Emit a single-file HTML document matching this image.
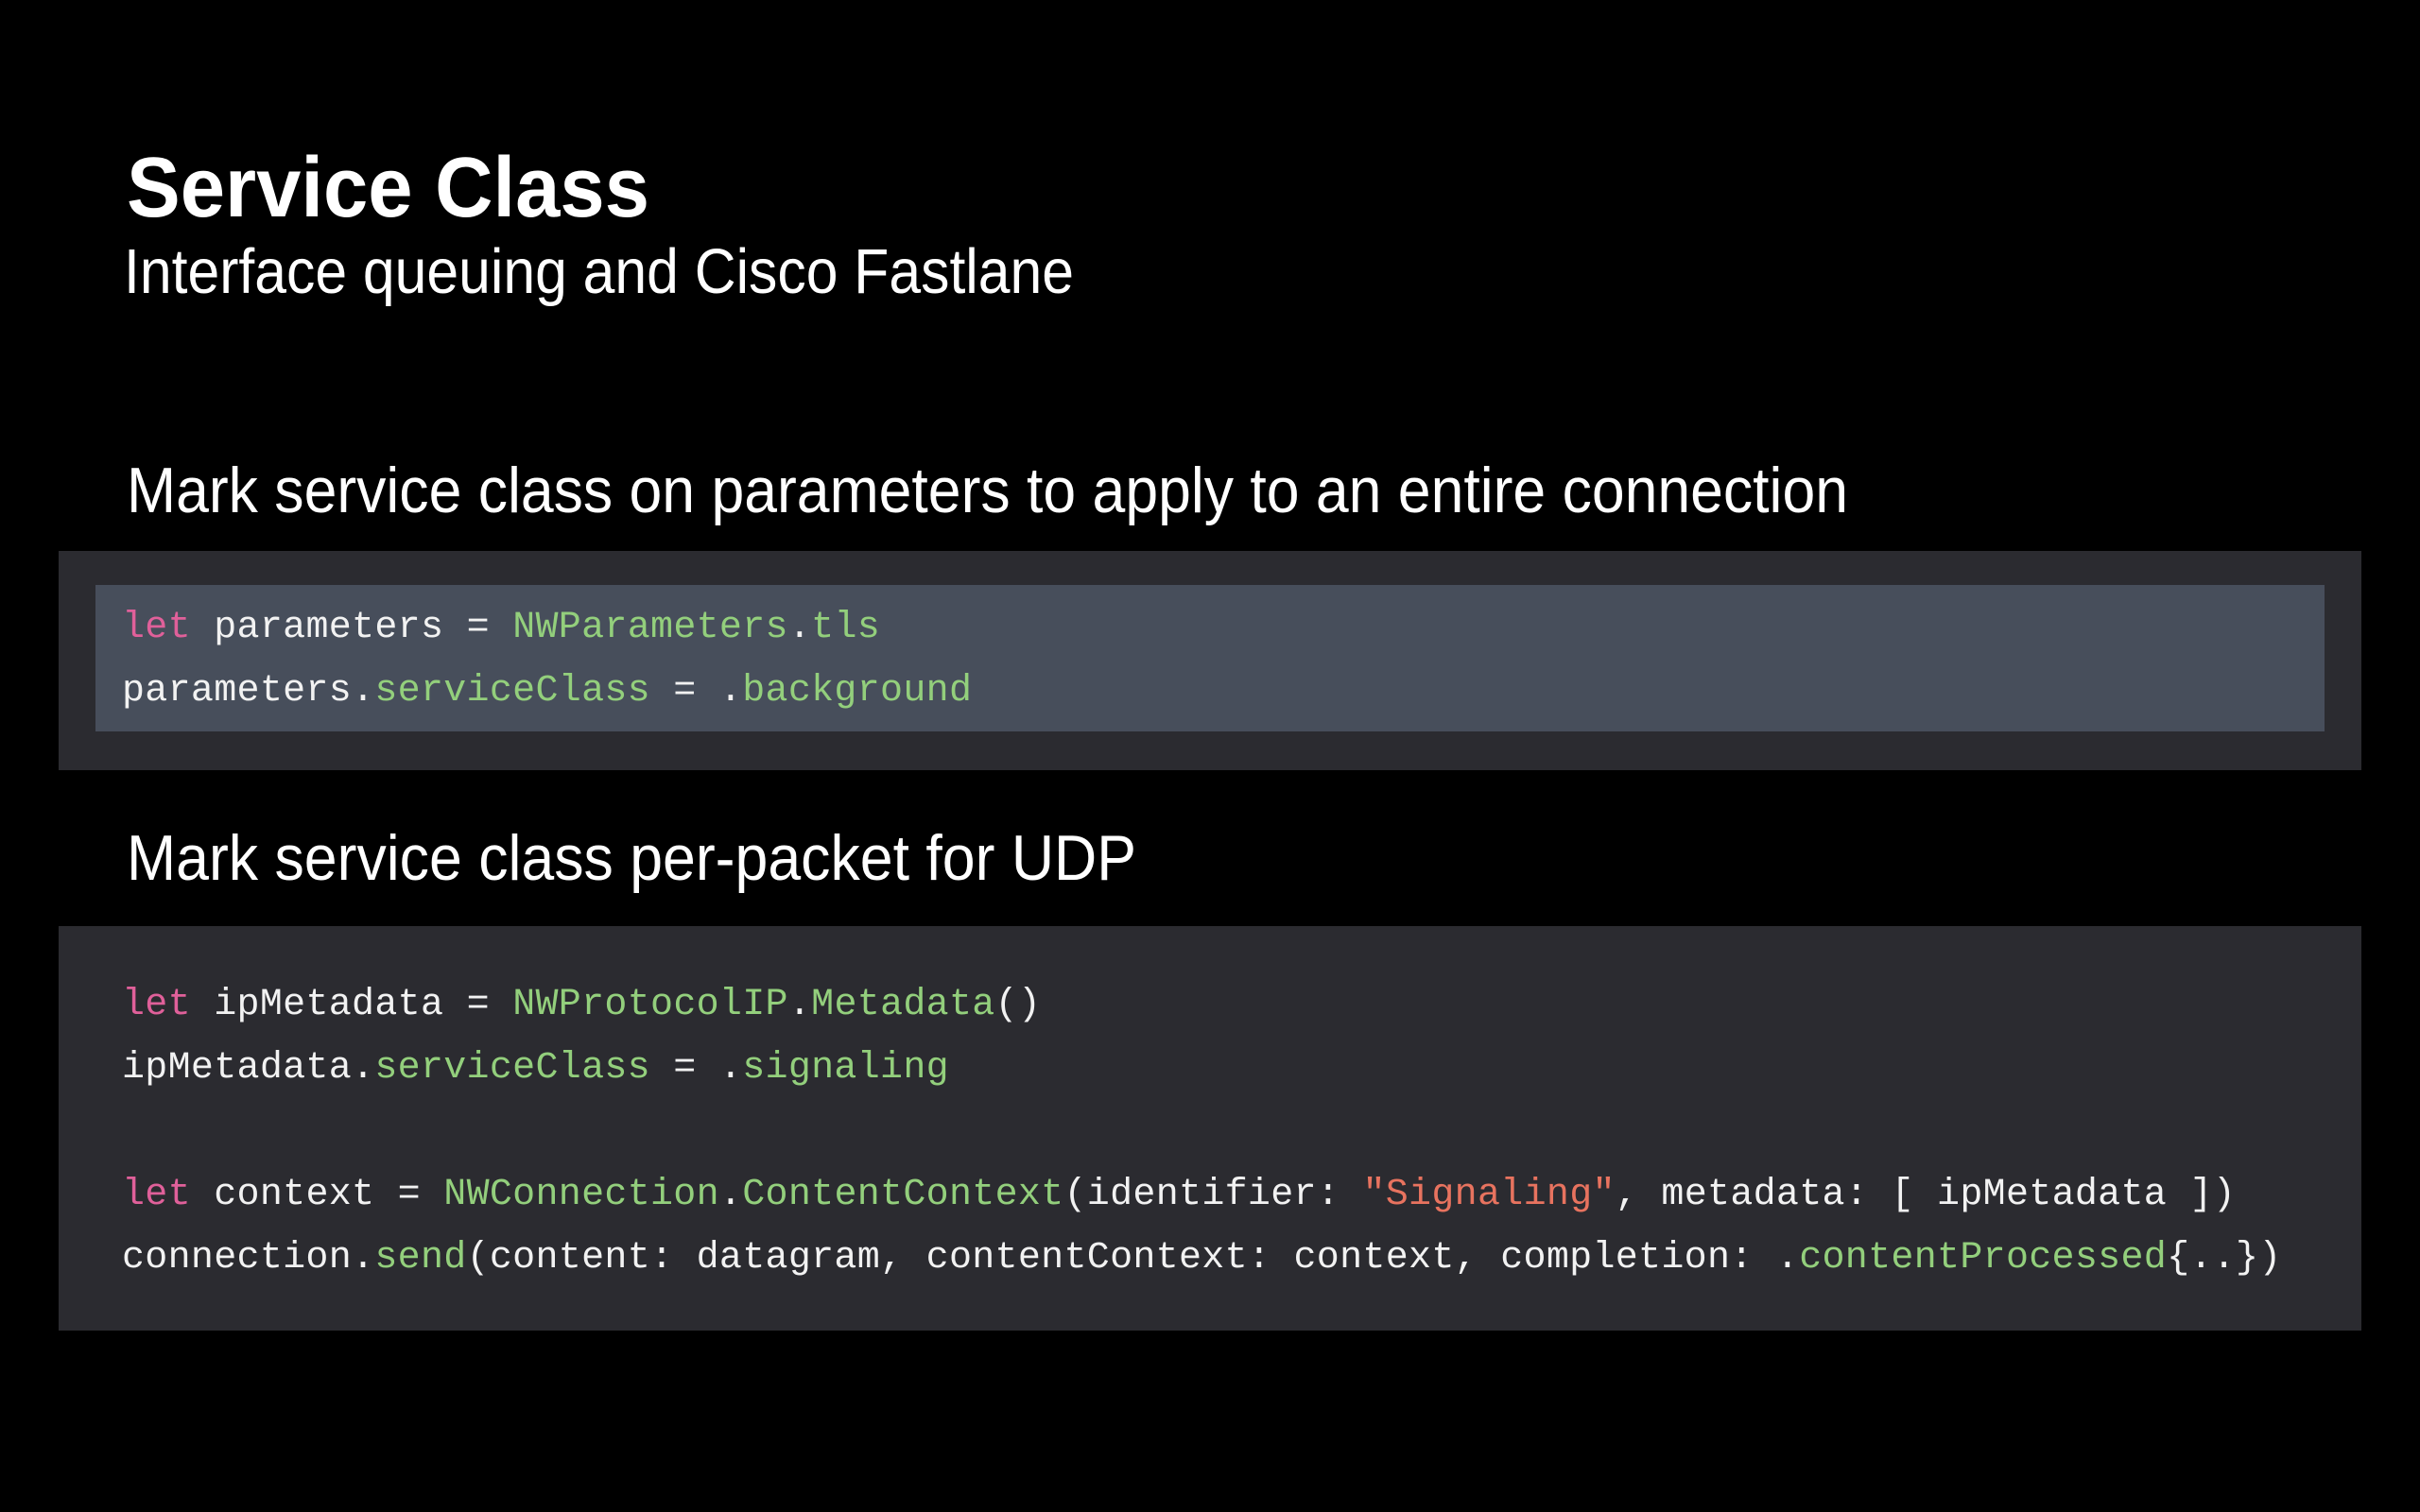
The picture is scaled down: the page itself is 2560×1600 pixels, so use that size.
<!DOCTYPE html>
<html><head><meta charset="utf-8"><style>
html,body{margin:0;padding:0;background:#000;}
svg{display:block}
.h{font-family:"Liberation Sans",sans-serif;fill:#fff}
.c{font-family:"Liberation Mono",monospace;font-size:40px;letter-spacing:0.3px;fill:#f2f2f2;white-space:pre}
.k{fill:#e0609a}.g{fill:#93cf7c}.s{fill:#e8735f}
</style></head><body>
<svg width="2560" height="1600" viewBox="0 0 2560 1600" xmlns="http://www.w3.org/2000/svg">
<rect width="2560" height="1600" fill="#000"/>
<text class="h" x="134" y="229" font-size="90" font-weight="bold" textLength="553" lengthAdjust="spacingAndGlyphs">Service Class</text>
<text class="h" x="131" y="310" font-size="67" textLength="1005" lengthAdjust="spacingAndGlyphs">Interface queuing and Cisco Fastlane</text>
<text class="h" x="134" y="542" font-size="68" textLength="1821" lengthAdjust="spacingAndGlyphs">Mark service class on parameters to apply to an entire connection</text>
<rect x="62" y="583" width="2436" height="232" fill="#2b2b30"/>
<rect x="101" y="619" width="2358" height="155" fill="#474e5b"/>
<text class="c" x="129" y="674" xml:space="preserve"><tspan class="k">let</tspan> parameters = <tspan class="g">NWParameters</tspan>.<tspan class="g">tls</tspan></text>
<text class="c" x="129" y="741" xml:space="preserve">parameters.<tspan class="g">serviceClass</tspan> = .<tspan class="g">background</tspan></text>
<text class="h" x="134" y="931" font-size="68" textLength="1068" lengthAdjust="spacingAndGlyphs">Mark service class per-packet for UDP</text>
<rect x="62" y="980" width="2436" height="428" fill="#2b2b30"/>
<text class="c" x="129" y="1073" xml:space="preserve"><tspan class="k">let</tspan> ipMetadata = <tspan class="g">NWProtocolIP</tspan>.<tspan class="g">Metadata</tspan>()</text>
<text class="c" x="129" y="1140" xml:space="preserve">ipMetadata.<tspan class="g">serviceClass</tspan> = .<tspan class="g">signaling</tspan></text>
<text class="c" x="129" y="1274" xml:space="preserve"><tspan class="k">let</tspan> context = <tspan class="g">NWConnection</tspan>.<tspan class="g">ContentContext</tspan>(identifier: <tspan class="s">"Signaling"</tspan>, metadata: [ ipMetadata ])</text>
<text class="c" x="129" y="1341" xml:space="preserve">connection.<tspan class="g">send</tspan>(content: datagram, contentContext: context, completion: .<tspan class="g">contentProcessed</tspan>{..})</text>
</svg>
</body></html>
